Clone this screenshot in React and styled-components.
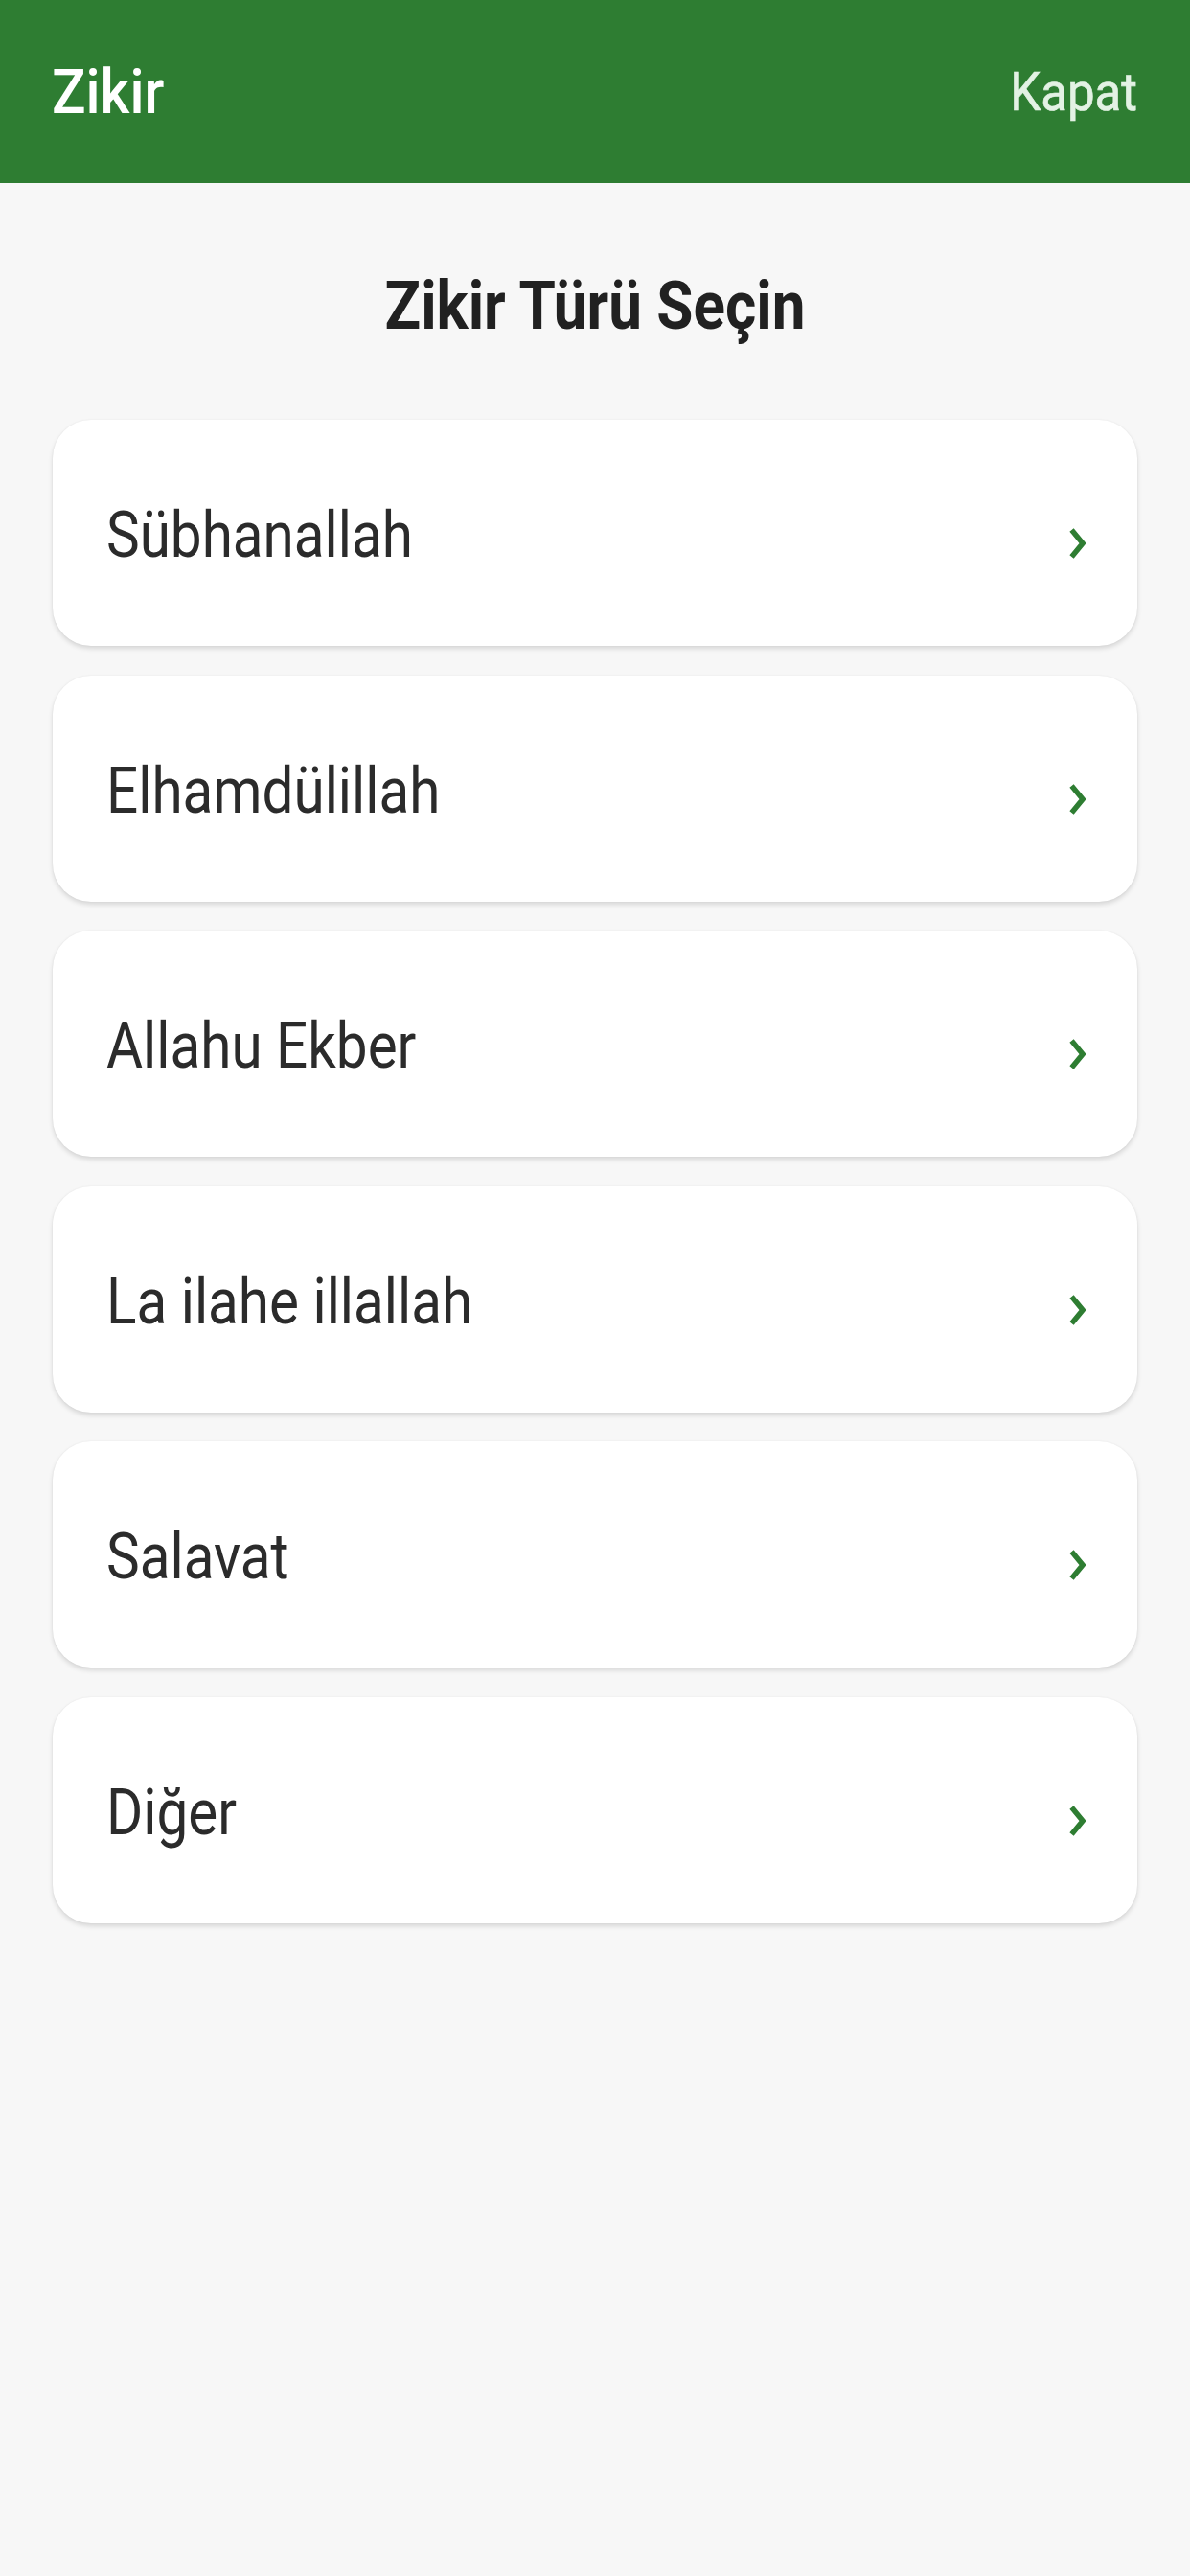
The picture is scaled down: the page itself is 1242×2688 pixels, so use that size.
import React from "react";
import styled, { createGlobalStyle } from "styled-components";

const Global = createGlobalStyle`
  html, body { margin: 0; padding: 0; background: #f7f7f7; }
  body { font-family: Roboto, "Noto Sans", "Liberation Sans", sans-serif; }
  #root { min-height: 2688px; background: #f7f7f7; }
`;

const Screen = styled.div`
  width: 1242px;
  min-height: 2688px;
  background: #f7f7f7;
  display: flex;
  flex-direction: column;
`;

const Header = styled.header`
  height: 191px;
  background: #2e7d32;
  display: flex;
  align-items: center;
  justify-content: space-between;
  padding: 0 55px 0 54px;
  box-sizing: border-box;
`;

const Tall = styled.span`
  display: inline-block;
  transform: scaleY(${(p) => p.$sy || 1.13});
  transform-origin: center;
`;

const HeaderTitle = styled.h1`
  margin: 0;
  font-size: 59px;
  font-weight: 500;
  line-height: 1;
  color: #ffffff;
`;

const CloseButton = styled.button`
  border: 0;
  background: none;
  padding: 0;
  font-family: inherit;
  font-size: 51px;
  font-weight: 400;
  line-height: 1;
  color: #e3f2e4;
  -webkit-text-stroke: 0.6px #e3f2e4;
`;

const PageTitle = styled.h2`
  margin: 97px 0 88px;
  text-align: center;
  font-size: 62px;
  font-weight: 700;
  line-height: 1;
  color: #212121;
`;

const List = styled.div`
  display: flex;
  flex-direction: column;
  gap: 30.5px;
  padding: 0 55px;
`;

const Card = styled.div`
  height: 236px;
  background: #ffffff;
  border-radius: 40px;
  box-shadow: 0 3px 5px rgba(0, 0, 0, 0.13), 0 0 2px rgba(0, 0, 0, 0.06);
  display: flex;
  align-items: center;
  justify-content: space-between;
  padding: 0 54px 0 56px;
  box-sizing: border-box;
`;

const CardLabel = styled.span`
  font-size: 58.4px;
  font-weight: 400;
  color: #2b2b2b;
  line-height: 1;
  margin-top: 5px;
`;

const Chevron = styled.svg`
  width: 17px;
  height: 32px;
  margin-top: 22px;
  flex: none;
`;

const items = [
  "Sübhanallah",
  "Elhamdülillah",
  "Allahu Ekber",
  "La ilahe illallah",
  "Salavat",
  "Diğer",
];

export default function App() {
  return (
    <Screen>
      <Global />
      <Header>
        <HeaderTitle>
          <Tall $sy={1.11}>Zikir</Tall>
        </HeaderTitle>
        <CloseButton>
          <Tall $sy={1.1}>Kapat</Tall>
        </CloseButton>
      </Header>
      <PageTitle>
        <Tall>Zikir Türü Seçin</Tall>
      </PageTitle>
      <List>
        {items.map((label) => (
          <Card key={label}>
            <CardLabel>
              <Tall $sy={1.15}>{label}</Tall>
            </CardLabel>
            <Chevron viewBox="0 0 17 32">
              <polyline
                points="2.5,2 14,16 2.5,30"
                fill="none"
                stroke="#2e7d32"
                strokeWidth="5.5"
                strokeLinejoin="miter"
              />
            </Chevron>
          </Card>
        ))}
      </List>
    </Screen>
  );
}
